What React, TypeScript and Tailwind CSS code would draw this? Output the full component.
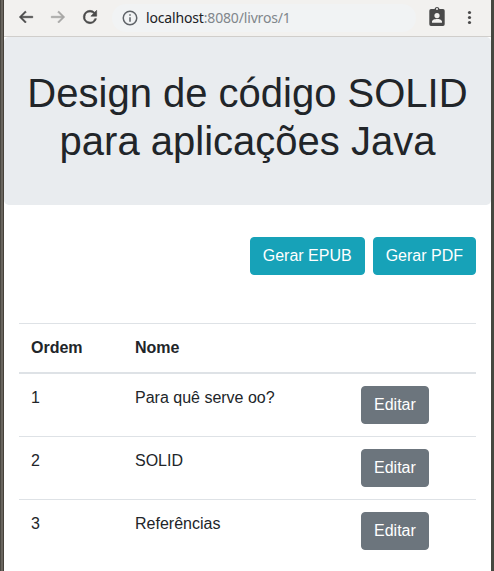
import React from "react";

const chapters = [
  { order: 1, name: "Para quê serve oo?" },
  { order: 2, name: "SOLID" },
  { order: 3, name: "Referências" },
];

function Toolbar() {
  return (
    <header className="flex h-[37px] items-start border-b border-[#d0cecb] bg-[#f2f1ef] pl-[13px] pt-[8px]">
      <svg width="18" height="18" viewBox="0 0 24 24" fill="#4a4a4a" stroke="#4a4a4a" strokeWidth=".7">
        <path d="M21 11H6.83l5.59-5.59L11 4l-8 8 8 8 1.41-1.41L6.83 13H21z" />
      </svg>
      <svg className="ml-[14px]" width="18" height="18" viewBox="0 0 24 24" fill="#a7a6a5" stroke="#a7a6a5" strokeWidth=".7">
        <path d="M3 11h14.17l-5.59-5.59L13 4l8 8-8 8-1.41-1.41L17.17 13H3z" />
      </svg>
      <svg className="-mt-[1px] ml-[13px]" width="20" height="20" viewBox="0 0 24 24" fill="#4a4a4a" stroke="#4a4a4a" strokeWidth=".7">
        <path d="M17.65 6.35A7.96 7.96 0 0 0 12 4a8 8 0 1 0 7.73 10h-2.08A6 6 0 1 1 12 6c1.66 0 3.14.69 4.22 1.78L13 11h7V4z" />
      </svg>
      <div className="-mt-[4px] ml-[12px] flex h-[28px] w-[304px] items-center rounded-full bg-[#f1f3f4] pl-[9px]">
        <svg width="18" height="18" viewBox="0 0 24 24" fill="#5f6368">
          <path d="M11 7h2v2h-2zm0 4h2v6h-2zm1-9a10 10 0 1 0 0 20 10 10 0 0 0 0-20zm0 18a8 8 0 1 1 0-16 8 8 0 0 1 0 16z" />
        </svg>
        <span className="ml-[7px] whitespace-nowrap font-['Noto_Sans',sans-serif] text-[14px] leading-[20px] tracking-[-0.16px] text-[#80868b]">
          <span className="text-[#202124]">localhost</span>:8080/livros/1
        </span>
      </div>
      <svg className="-mt-[2px] ml-[11px]" width="20" height="22" viewBox="0 0 20 22">
        <path fill="#4a4a4a" fillRule="evenodd" d="M4 3h3.500a2.600 2.600 0 0 1 5 0H16a1.700 1.700 0 0 1 1.700 1.700v13.600A1.700 1.700 0 0 1 16 20H4a1.700 1.700 0 0 1-1.700-1.700V4.700A1.700 1.700 0 0 1 4 3zm6-1a1 1 0 1 0 0 2 1 1 0 0 0 0-2zm0 5a2.600 2.600 0 1 0 0 5.200A2.600 2.600 0 0 0 10 7zm-5 9.700h10v-1.200c0-1.700-3-2.500-5-2.500s-5 .8-5 2.500z" />
      </svg>
      <svg className="ml-[13px] mt-[1px]" width="18" height="18" viewBox="0 0 18 18" fill="#4a4a4a">
        <circle cx="9.500" cy="3.500" r="1.600" />
        <circle cx="9.500" cy="8.500" r="1.600" />
        <circle cx="9.500" cy="13.500" r="1.600" />
      </svg>
    </header>
  );
}

export default function App() {
  return (
    <div className="flex h-[571px] w-[494px] overflow-hidden bg-white font-['Liberation_Sans',Arial,sans-serif] text-[16px] leading-[24px] text-[#212529]">
      <div className="w-[4px] shrink-0 border-l border-r border-l-[#4b4842] border-r-[#46413a] bg-[#69655e]" />
      <div className="w-[487px] shrink-0">
        <Toolbar />
        <section className="rounded-[4.8px] bg-[#e9ecef] px-[15px] py-8">
          <h1 className="mb-2 text-center text-[40px] font-medium leading-[48px]">
            Design de código SOLID para aplicações Java
          </h1>
        </section>
        <main className="px-[15px]">
          <div className="mt-8 flex justify-end gap-2">
            <button className="rounded border border-[#17a2b8] bg-[#17a2b8] px-3 py-[6px] text-white">Gerar EPUB</button>
            <button className="rounded border border-[#17a2b8] bg-[#17a2b8] px-3 py-[6px] text-white">Gerar PDF</button>
          </div>
          <table className="mt-12 w-full table-fixed border-separate border-spacing-0">
            <colgroup>
              <col className="w-[104px]" />
              <col className="w-[226px]" />
              <col className="w-[127px]" />
            </colgroup>
            <thead>
              <tr className="text-left">
                <th className="border-b-2 border-t border-[#dee2e6] p-3 font-bold">Ordem</th>
                <th className="border-b-2 border-t border-[#dee2e6] p-3 font-bold">Nome</th>
                <th className="border-b-2 border-t border-[#dee2e6] p-3" />
              </tr>
            </thead>
            <tbody className="[&>tr+tr>td]:border-t">
              {chapters.map((chapter) => (
                <tr key={chapter.order}>
                  <td className="border-[#dee2e6] p-3 align-top">{chapter.order}</td>
                  <td className="border-[#dee2e6] p-3 align-top">{chapter.name}</td>
                  <td className="border-[#dee2e6] p-3 align-top">
                    <button className="block rounded border border-[#6c757d] bg-[#6c757d] px-3 py-[6px] text-white">Editar</button>
                  </td>
                </tr>
              ))}
            </tbody>
          </table>
        </main>
      </div>
      <div className="w-[3px] shrink-0 bg-[#464840]" />
    </div>
  );
}
